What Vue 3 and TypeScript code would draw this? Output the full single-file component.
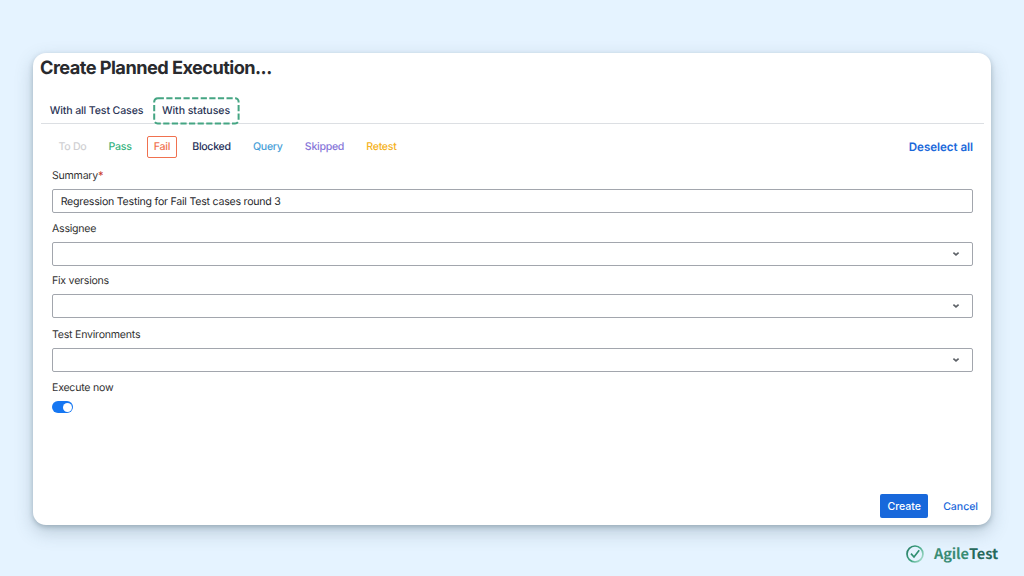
<script setup lang="ts">
import { ref } from 'vue'

interface Status { name: string; tone: string }
interface Field { id: string; label: string; value?: string; required?: boolean }

const tabs = ['With all Test Cases', 'With statuses']
const activeTab = ref('With statuses')
const selected = ref('Fail')
const executeNow = ref(true)

const statuses: Status[] = [
  { name: 'To Do', tone: 'todo' },
  { name: 'Pass', tone: 'pass' },
  { name: 'Fail', tone: 'fail' },
  { name: 'Blocked', tone: 'blocked' },
  { name: 'Query', tone: 'query' },
  { name: 'Skipped', tone: 'skipped' },
  { name: 'Retest', tone: 'retest' },
]

const fields: Field[] = [
  { id: 'summary', label: 'Summary', value: 'Regression Testing for Fail Test cases round 3', required: true },
  { id: 'assignee', label: 'Assignee' },
  { id: 'versions', label: 'Fix versions' },
  { id: 'environments', label: 'Test Environments' },
]
</script>

<template>
  <main class="page">
    <section class="dialog">
      <h1 class="title">Create Planned Execution...</h1>
      <nav class="tabs">
        <span
          v-for="tab in tabs"
          :key="tab"
          class="tab"
          :class="{ active: tab === activeTab }"
          @click="activeTab = tab"
        >
          {{ tab }}
          <svg v-if="tab === activeTab" class="outline" viewBox="0 0 87 28">
            <rect x="1.2" y="1.2" width="84.4" height="25.2" rx="3.5" />
          </svg>
        </span>
      </nav>
      <div class="statuses">
        <span
          v-for="s in statuses"
          :key="s.name"
          class="status"
          :class="[s.tone, { picked: s.name === selected }]"
          @click="selected = s.name"
        >{{ s.name }}</span>
        <a class="deselect" @click="selected = ''">Deselect all</a>
      </div>
      <form class="form" @submit.prevent>
        <div v-for="f in fields" :key="f.id" class="field" :class="f.id">
          <label class="label">{{ f.label }}<b v-if="f.required" class="star">*</b></label>
          <div class="control">
            <span class="value">{{ f.value }}</span>
            <svg v-if="!f.value" class="chevron" viewBox="0 0 8 6">
              <path d="M1.4 1.6 4 3.9 6.6 1.6" />
            </svg>
          </div>
        </div>
        <label class="label execute">Execute now</label>
        <span class="toggle" :class="{ on: executeNow }" @click="executeNow = !executeNow"><i class="knob" /></span>
      </form>
      <footer class="actions">
        <button class="create">Create</button>
        <a class="cancel">Cancel</a>
      </footer>
    </section>
    <div class="brand">
      <svg class="mark" viewBox="0 0 20 20">
        <defs>
          <linearGradient id="ring" x1="0" y1="0.2" x2="1" y2="0.8">
            <stop offset="0" stop-color="#2a8068" />
            <stop offset="0.5" stop-color="#3fa582" />
            <stop offset="1" stop-color="#a5dccb" />
          </linearGradient>
        </defs>
        <circle cx="10" cy="10" r="8" stroke="url(#ring)" />
        <path d="M6 9.6 9 13 14.2 6.3" stroke="#2f8f72" />
      </svg>
      <span class="agile">Agile</span><span class="test">Test</span>
    </div>
  </main>
</template>

<style>
body { margin: 0; overflow: hidden; }
</style>

<style scoped>
.page {
  box-sizing: border-box;
  width: 1024px;
  height: 576px;
  padding: 53px 33px 0;
  background: #e5f3ff;
  font-family: Inter, "Liberation Sans", sans-serif;
  font-size: 10.6px;
  letter-spacing: -0.05px;
  text-rendering: geometricPrecision;
  color: #333;
}
.dialog {
  box-sizing: border-box;
  display: flex;
  flex-direction: column;
  width: 958px;
  height: 472px;
  padding: 0 7px;
  border-radius: 13px;
  background: #fff;
  box-shadow: 0 7px 18px rgba(60, 85, 100, 0.25), 0 2px 5px rgba(60, 85, 100, 0.3);
}
.title {
  margin: 0;
  height: 30px;
  line-height: 30px;
  font-size: 18.2px;
  font-weight: 700;
  letter-spacing: -0.55px;
  color: #292a2e;
}
.tabs {
  display: flex;
  align-items: flex-start;
  height: 26px;
  margin: 14px 0 0 1px;
  border-bottom: 1px solid #dcdfe3;
  font-weight: 500;
  letter-spacing: -0.13px;
  color: #2b3556;
}
.tab {
  position: relative;
  height: 27px;
  line-height: 28px;
  margin-left: 8.7px;
  width: 103.3px;
  white-space: nowrap;
}
.tab.active { width: 87px; margin-left: 0; padding-left: 9px; letter-spacing: -0.08px; }
.outline {
  position: absolute;
  left: 0;
  top: 0;
  width: 87px;
  height: 28px;
  fill: none;
  stroke: #45a583;
  stroke-width: 2;
  stroke-dasharray: 6.2 2.4;
}
.statuses {
  display: flex;
  align-items: center;
  height: 22px;
  margin: 12px 11px 0 11.5px;
}
.status {
  box-sizing: border-box;
  height: 22px;
  line-height: 20.6px;
  padding: 0 6px;
  margin-right: 8.2px;
  border: 1px solid transparent;
  border-radius: 2px;
  letter-spacing: -0.29px;
  font-weight: 450;
  white-space: nowrap;
}
.todo { color: #cfcfd2; }
.pass { color: #36b37e; }
.fail { color: #f0714f; }
.blocked { color: #253058; }
.query { color: #4a9fd8; }
.skipped { color: #8777d9; }
.retest { color: #f5b222; }
.picked { border-color: #f0714f; }
.deselect {
  margin-left: auto;
  font-size: 11.6px;
  font-weight: 600;
  color: #1a68da;
}
.form { margin: 10px 11px 0 12px; }
.field { height: 52.5px; }
.field.versions { height: 54px; }
.label { display: block; height: 14px; line-height: 15px; letter-spacing: -0.24px; }
.star { color: #c9372c; font-weight: 500; }
.control {
  box-sizing: border-box;
  display: flex;
  align-items: center;
  justify-content: space-between;
  height: 24px;
  margin-top: 7px;
  padding: 0 12px 0 7.7px;
  border: 1px solid #a2a6ad;
  border-radius: 2px;
  letter-spacing: -0.23px;
  color: #292a2e;
}
.chevron {
  width: 8px;
  height: 6px;
  fill: none;
  stroke: #5c6066;
  stroke-width: 1.6;
}
.toggle {
  box-sizing: border-box;
  display: flex;
  width: 21px;
  height: 12px;
  margin-top: 7.5px;
  padding: 1.5px;
  border-radius: 6px;
  background: #b8bcc2;
}
.toggle.on { justify-content: flex-end; background: #1677f2; }
.knob { width: 9px; height: 9px; border-radius: 50%; background: #fff; }
.actions {
  display: flex;
  align-items: center;
  justify-content: flex-end;
  gap: 15px;
  margin: auto 6px 7px 0;
  font-weight: 500;
}
.create {
  width: 48px;
  height: 24px;
  padding: 0;
  border: 0;
  border-radius: 2px;
  background: #1868db;
  color: #fff;
  font: inherit;
  letter-spacing: inherit;
}
.cancel { color: #1a68da; }
.brand {
  display: flex;
  align-items: center;
  justify-content: flex-end;
  height: 20px;
  margin: 18px -7px 0 0;
  font-family: "Noto Sans CJK JP", "Noto Sans", sans-serif;
  font-size: 14.6px;
  font-weight: 700;
  letter-spacing: -0.1px;
}
.mark {
  width: 20px;
  height: 20px;
  margin: 1px 9px 0 0;
  fill: none;
  stroke-width: 1.7;
}
.agile { color: #3a8c74; }
.test { color: #28695c; }
</style>
